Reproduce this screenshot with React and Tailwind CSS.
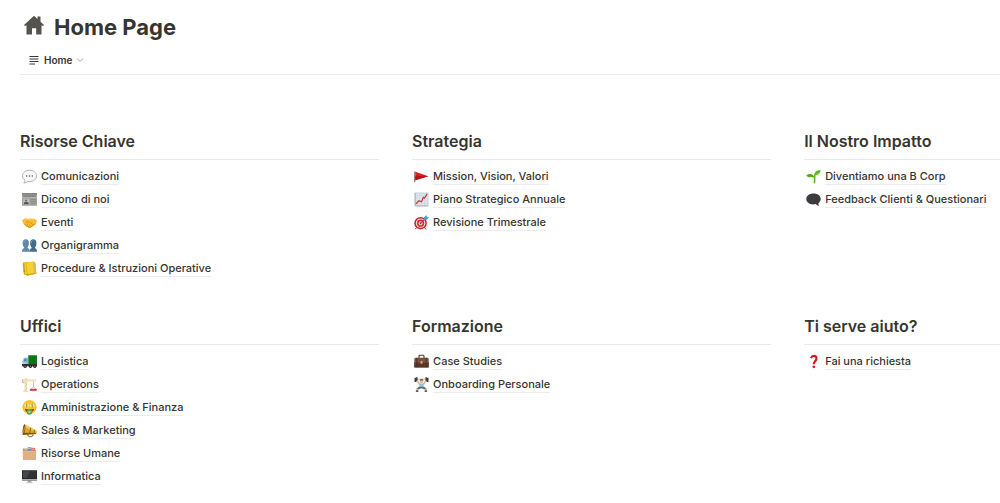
const icons = {
  speech: (
    <>
      <path d="M12 2C5.500 2 .8 5.700.8 11c0 3.200 1.500 5.500 4 7.100 0 1.700-.7 3-2.200 4.200 2.900.1 5-.8 6.600-2.400.9.1 1.800.2 2.800.2 6.500 0 11.200-3.900 11.200-9.100S18.500 2 12 2Z" fill="#f8f8f8" stroke="#9a9a9a" strokeWidth="1.200" />
      <circle cx="7.500" cy="11" r="1.200" fill="#555" />
      <circle cx="12" cy="11" r="1.200" fill="#555" />
      <circle cx="16.500" cy="11" r="1.200" fill="#555" />
    </>
  ),
  newspaper: (
    <>
      <rect x="0" y="2" width="24" height="20" fill="#a0a09e" />
      <rect x="0" y="2" width="24" height="2" fill="#777" />
      <path d="M2 6.500h20" stroke="#777" strokeWidth="2" strokeDasharray="4 .6" />
      <path d="M0 9h24" stroke="#c4c4c2" strokeWidth="1" />
      <rect x="2" y="11" width="10" height="9" fill="#bcbcba" />
      <path d="M3 19.500c0-3 1-4 3.500-4s4.500 1 4.500 4Z" fill="#555" />
      <circle cx="6.500" cy="13.500" r="1.500" fill="#666" />
      <path d="M13.500 12H22M13.500 15H22M13.500 18H22" stroke="#858583" strokeWidth="1.200" />
    </>
  ),
  handshake: (
    <>
      <path d="M0 8.500 5 5l5 1.500 3-1 6 .5 5 2.500-2 6.500-4 2-5 4-5-2-5.500-4.500Z" fill="#f8bd2f" />
      <path d="m10 7-3 5c1.500 1.500 3 .5 4.500-1.500L18 16" fill="none" stroke="#dc941a" strokeWidth="1.400" />
      <path d="m4 14 4 4 4.500 2 5-3.500 3-2" fill="none" stroke="#e39a1c" strokeWidth="1.800" strokeLinejoin="round" />
      <path d="m8 16 2-2m1 4 2-2" stroke="#c67c12" strokeWidth="1" />
      <path d="m5 6 5 1 3-1 6 1" fill="none" stroke="#ffdc62" strokeWidth="1.200" />
    </>
  ),
  people: (
    <>
      <path d="M12 22c.2-4 1.500-5 4-6-2-2-3-4.500-3-8 0-4 2-6 5-6s5 2 5 6c0 3.500-1 6-2.500 8 2 1 3.500 2 3.500 6Z" fill="#426d8d" />
      <path d="M0 22c0-4 1-5 4-6-2-2-3-4.500-3-8 0-4 2-6 5-6s5 2 5 6c0 3.500-1 6-2.500 8 3 1 4 2 4 6Z" fill="#5c88a9" />
      <path d="M3 8c0-3 1.500-4.500 3.500-4.500M15 8c0-3 1-4.500 3-4.500" fill="none" stroke="#86aac4" strokeWidth="1.300" />
    </>
  ),
  notebook: (
    <>
      <path d="m2 2.500 17-1.500 4 19-14 3-6-2Z" fill="#b98a12" />
      <path d="M2 2.500 18.500 1l1 19L4.500 21.500Z" fill="#f5d030" />
      <path d="M18.500 1 22 3l1 17.500-3.500-.5Z" fill="#d7bd5d" />
      <path d="m4.500 21.500 15-1.500 3.500.5L9 23Z" fill="#d5a414" />
      <path d="m6.500 3 1.500 17.500" stroke="#dbac16" strokeWidth="1.200" />
      <path d="M1 5h3M1.500 8h3M1.500 11h3M2 14h3M2 17h3" stroke="#97780f" strokeWidth="1.200" />
    </>
  ),
  flag: (
    <>
      <path d="M1.200 4v17" stroke="#7c5147" strokeWidth="1.500" />
      <path d="m2 4.500 21 7L2 18Z" fill="#d52020" />
      <path d="m2 11 21 .5L2 18Z" fill="#b51317" />
    </>
  ),
  chart: (
    <>
      <rect x="1.500" y="1.500" width="21" height="21" fill="#dce7ef" stroke="#b0bec8" />
      <path d="M5 2v20M9 2v20M13 2v20M17 2v20M2 6h20M2 10h20M2 14h20M2 18h20" stroke="#c5d3dd" strokeWidth=".7" />
      <path d="M2 2v20h20" fill="none" stroke="#9aabb6" strokeWidth="1.200" />
      <path d="m3 19 5-5 4 1.500 3-7 2 1L21 3" fill="none" stroke="#d9262b" strokeWidth="1.800" />
    </>
  ),
  target: (
    <>
      <circle cx="10.500" cy="13" r="10" fill="#c8252b" />
      <circle cx="10.500" cy="13" r="7.500" fill="#f3e6e1" />
      <circle cx="10.500" cy="13" r="5.800" fill="#ce2a30" />
      <circle cx="10.500" cy="13" r="3.200" fill="#f5e7e2" />
      <circle cx="10.500" cy="13" r="1.600" fill="#c91f27" />
      <path d="m10.500 13 9-8.500" stroke="#355f76" strokeWidth="1.500" />
      <path d="m15.500 7.500.5-4L20 0l.7 3.300 3.300.7-4 4Z" fill="#3ea5d0" />
      <path d="m4 20-2 3m15-3 2 3" stroke="#963026" strokeWidth="1.500" />
    </>
  ),
  seedling: (
    <>
      <path d="M13.500 22c.8-6-.5-9 1-13" fill="none" stroke="#62ac22" strokeWidth="2.500" strokeLinecap="round" />
      <path d="M13.500 13C11 14 9 12 7 13c-3 1-5-.5-6.500-3C5 6.500 11 7 13.500 13Z" fill="#55b51d" />
      <path d="M14 9C13 4 17 2 23.500 1.500 23 7 19 11 14 9Z" fill="#67c629" />
      <path d="M3 10c4-1 7 0 10 3m2-5c2-3 4-4 7-5" fill="none" stroke="#318b16" strokeWidth=".8" />
    </>
  ),
  darkSpeech: (
    <path d="M12 2.500C5.500 2.500.5 6 .5 11.300c0 5.200 4.500 8.400 10.800 8.500 1.700 0 3-.1 4.300-.5 1.500 1.700 3.200 2.600 5.600 2.700-1-1.200-1.500-2.500-1.300-4.200 2.300-1.700 3.600-3.800 3.600-6.500C23.500 6 18.500 2.500 12 2.500Z" fill="#3c3c3e" />
  ),
  truck: (
    <>
      <rect x="10" y="2" width="14" height="16" fill="#0b7d18" />
      <path d="M13.500 3v14M17 3v14M20.500 3v14" stroke="#06600f" strokeWidth=".8" />
      <path d="M.5 18v-6l2-5c.5-1 1-1.500 2-1.500H9.500V18Z" fill="#b7c4cc" />
      <path d="m2 12 2-4.500h3.500V12Z" fill="#2c94cf" />
      <path d="M8.500 6v12" stroke="#8b989f" />
      <path d="M0 16h24v3.500H0Z" fill="#34373a" />
      <circle cx="5" cy="19.500" r="2.700" fill="#1c1c1c" />
      <circle cx="13.500" cy="19.500" r="2.700" fill="#1c1c1c" />
      <circle cx="20.500" cy="19.500" r="2.700" fill="#1c1c1c" />
      <path d="M4 19.500h2m6.500 0h2m5 0h2" stroke="#aaa" strokeWidth="1.500" />
    </>
  ),
  crane: (
    <>
      <path d="M5 23V2h2.500v21M1 4.500h22M1 6.500h22" fill="none" stroke="#efd3a6" strokeWidth="1.400" />
      <path d="m5 9 2.500 3L5 15l2.500 3L5 21" fill="none" stroke="#deb982" strokeWidth="1" />
      <path d="M1 4v5h3" fill="none" stroke="#d9ac78" strokeWidth="1.500" />
      <path d="M18.500 7v9m0 0-4 3m4-3 4 3" fill="none" stroke="#b29a86" strokeWidth="1" />
      <path d="M12.500 19h11v3h-11Z" fill="#c73636" />
      <path d="M2 22.500h8" stroke="#e3c89d" strokeWidth="1.500" />
    </>
  ),
  money: (
    <>
      <circle cx="12" cy="11.500" r="11" fill="#fbc831" />
      <circle cx="12" cy="11.500" r="10.500" fill="none" stroke="#efae25" />
      <ellipse cx="7.500" cy="8.500" rx="3.200" ry="3.500" fill="#fff0b1" />
      <ellipse cx="16.500" cy="8.500" rx="3.200" ry="3.500" fill="#fff0b1" />
      <path d="M9 7c-3-1.500-4 1.500-1.500 2S8 12 6 11m1.500-5.500V12M18 7c-3-1.500-4 1.500-1.500 2s.5 3-1.500 2m1.500-5.500V12" fill="none" stroke="#9b7a1e" strokeWidth=".9" />
      <path d="M4.500 14c4 1.500 11 1.500 15 0-1 4-3 6-7.500 6s-6.500-2-7.500-6Z" fill="#834810" />
      <path d="M8 15.500h8V22c-2 2-6 2-8 0Z" fill="#58a94f" />
      <circle cx="12" cy="19" r="1.700" fill="#bcdf98" />
    </>
  ),
  megaphone: (
    <>
      <path d="M9 17.500c0 4 2 4.500 5 4.500 2.500 0 3.500-1 3.500-4" fill="none" stroke="#5d4520" strokeWidth="1.500" />
      <path d="M4 2 23 12.500c1 1.500.5 4-.5 5L1.500 18.500Z" fill="#dca82c" />
      <path d="M4 2 23 12.500l-.5 1.500L5 7Z" fill="#f0ca50" />
      <path d="M2 15.500 22.500 16v1.500L1 19Z" fill="#80570f" />
      <path d="M4 2C1.500 2 0 17 1.500 18.500 4.500 19 7 3 4 2Z" fill="#6e4c13" />
      <path d="M3.800 5C2.500 6 1.800 14.500 2.300 16 4 15 5 7 3.800 5Z" fill="#d4a632" />
      <path d="m14 7.500-2 10M20 11l-1 6.500" stroke="#8c6014" strokeWidth="1.500" />
    </>
  ),
  folder: (
    <>
      <path d="M1.500 4h7l1 2H22v15H1.500Z" fill="#bc8b58" />
      <rect x="9" y="2" width="6" height="6" fill="#598ed2" />
      <rect x="15" y="3" width="6" height="5" fill="#e15c58" />
      <path d="M3 5h6M10 4h4m2 1h4" stroke="#f2e8d5" strokeWidth="1" />
      <path d="M1 7.500h22l-1 15H2Z" fill="#dfb27f" />
      <path d="M2 8.500h20" stroke="#e8c08f" strokeWidth="1" />
    </>
  ),
  monitor: (
    <>
      <path d="M9.500 17h5l1 5h-7Z" fill="#a8a9ab" />
      <path d="M7 22h10" stroke="#c4c5c7" strokeWidth="1.500" />
      <rect x="0" y="2" width="24" height="16.500" fill="#272829" />
      <path d="M1.500 3.500h21v11h-21Z" fill="#45484a" />
      <path d="M13 3.500h9.500v11H7Z" fill="#303234" />
      <path d="M0 16h24v2.500H0Z" fill="#aeb0b2" />
    </>
  ),
  briefcase: (
    <>
      <path d="M8 7V3.500c0-1 .5-1.500 1.500-1.500h5c1 0 1.500.5 1.500 1.500V7" fill="none" stroke="#59382c" strokeWidth="1.800" />
      <path d="M2.500 6h19c1 0 2 1 2 2v13.500H.5V8c0-1 1-2 2-2Z" fill="#79503f" />
      <path d="M.5 13h23v8.500H.5Z" fill="#583629" />
      <path d="M1 13h22" stroke="#8a614d" />
      <path d="M4.500 6v15m15-15v15" stroke="#4b2c22" strokeWidth="1.300" />
      <rect x="10.500" y="11.500" width="3" height="4" fill="#d0b987" />
    </>
  ),
  lifter: (
    <>
      <path d="M2 3.500h20" stroke="#999" strokeWidth="1" />
      <path d="M2 1v7M4.500.5V7M22 1v7M19.500.5V7" stroke="#333" strokeWidth="2.300" />
      <path d="m5 6 4 6m10-6-4 6" stroke="#deb594" strokeWidth="2.500" />
      <circle cx="12" cy="7" r="3" fill="#e8bf9a" />
      <path d="M9 6c0-4 6-4 6 0l-3-1Z" fill="#73513b" />
      <path d="M8 10.500h8l-1 6H9Z" fill="#a9bcc4" />
      <path d="m9 16-4 3v4m10-7 4 3v4" fill="none" stroke="#d3a682" strokeWidth="2.500" />
      <path d="m8 15.500-3 3 2 1.500 5-2 5 2 2-1.500-3-3Z" fill="#3f7598" />
      <path d="M3 22.500h4m10 0h4" stroke="#333" strokeWidth="2" />
    </>
  ),
  question: (
    <>
      <path d="M8 6.500C9 4 10.500 3 12.500 3c2.700 0 4.300 1.500 4.300 4.200 0 4.200-4.300 4-4.300 9.300" fill="none" stroke="#dd1720" strokeWidth="3.500" />
      <circle cx="12.500" cy="20.500" r="2.200" fill="#dd1720" />
    </>
  ),
};

const sections = [
  {
    title: "Risorse Chiave",
    links: [
      ["speech", "Comunicazioni"],
      ["newspaper", "Dicono di noi"],
      ["handshake", "Eventi"],
      ["people", "Organigramma"],
      ["notebook", "Procedure & Istruzioni Operative"],
    ],
  },
  {
    title: "Strategia",
    links: [
      ["flag", "Mission, Vision, Valori"],
      ["chart", "Piano Strategico Annuale"],
      ["target", "Revisione Trimestrale"],
    ],
  },
  {
    title: "Il Nostro Impatto",
    links: [
      ["seedling", "Diventiamo una B Corp"],
      ["darkSpeech", "Feedback Clienti & Questionari"],
    ],
  },
  {
    title: "Uffici",
    links: [
      ["truck", "Logistica"],
      ["crane", "Operations"],
      ["money", "Amministrazione & Finanza"],
      ["megaphone", "Sales & Marketing"],
      ["folder", "Risorse Umane"],
      ["monitor", "Informatica"],
    ],
  },
  {
    title: "Formazione",
    links: [
      ["briefcase", "Case Studies"],
      ["lifter", "Onboarding Personale"],
    ],
  },
  {
    title: "Ti serve aiuto?",
    links: [["question", "Fai una richiesta"]],
  },
];

function Section({ title, links }) {
  return (
    <section className="min-w-0">
      <h2 className="border-b border-[#e9e9e8] pb-1.5 text-base leading-6 font-semibold whitespace-nowrap">
        {title}
      </h2>
      <ul className="pt-[5px] pl-0.5">
        {links.map(([icon, label]) => (
          <li key={label} className="flex h-[23px] items-center">
            <a href="#" className="flex items-center gap-1 whitespace-nowrap">
              <svg viewBox="0 0 24 24" className="size-[15px] shrink-0" aria-hidden="true">
                {icons[icon]}
              </svg>
              <span className="border-b border-[#ececea] text-[11px] leading-4 font-medium">
                {label}
              </span>
            </a>
          </li>
        ))}
      </ul>
    </section>
  );
}

export default function App() {
  return (
    <div className="overflow-hidden bg-white pt-3 pb-4 pl-5 font-['Inter','Liberation_Sans',sans-serif] text-[#37352f]">
      <header className="flex items-center gap-2.5 pl-1">
        <svg viewBox="0 0 20 20" className="mb-1 size-5 shrink-0" aria-hidden="true">
          <path d="M10 .8 13.500 4V1.500h3v5.200L20 10l-1 1-1.500-.8v9.300h-5.300v-6.300H8v6.300H2.500v-9.300L1 11l-1-1Z" fill="#55534e" />
        </svg>
        <h1 className="text-[22px] leading-[30px] font-bold">Home Page</h1>
      </header>

      <nav className="mt-2 flex h-[25px] border-b border-[#e9e9e8] pl-2">
        <button type="button" className="flex h-5 items-center text-[10px] font-semibold">
          <svg viewBox="0 0 12 12" className="mr-1 size-3" aria-hidden="true">
            <path d="M1.500 2.500h9M1.500 5h9M1.500 7.500h9M1.500 10h5.500" stroke="#37352f" />
          </svg>
          Home
          <svg viewBox="0 0 8 8" className="ml-1 size-2" fill="none" aria-hidden="true">
            <path d="m1 2.500 3 3 3-3" stroke="#aaa9a6" />
          </svg>
        </button>
      </nav>

      <main className="mt-[54px] grid grid-cols-[11fr_11fr_6fr] gap-x-[33px] gap-y-[34px]">
        {sections.map((section) => (
          <Section key={section.title} {...section} />
        ))}
      </main>
    </div>
  );
}
